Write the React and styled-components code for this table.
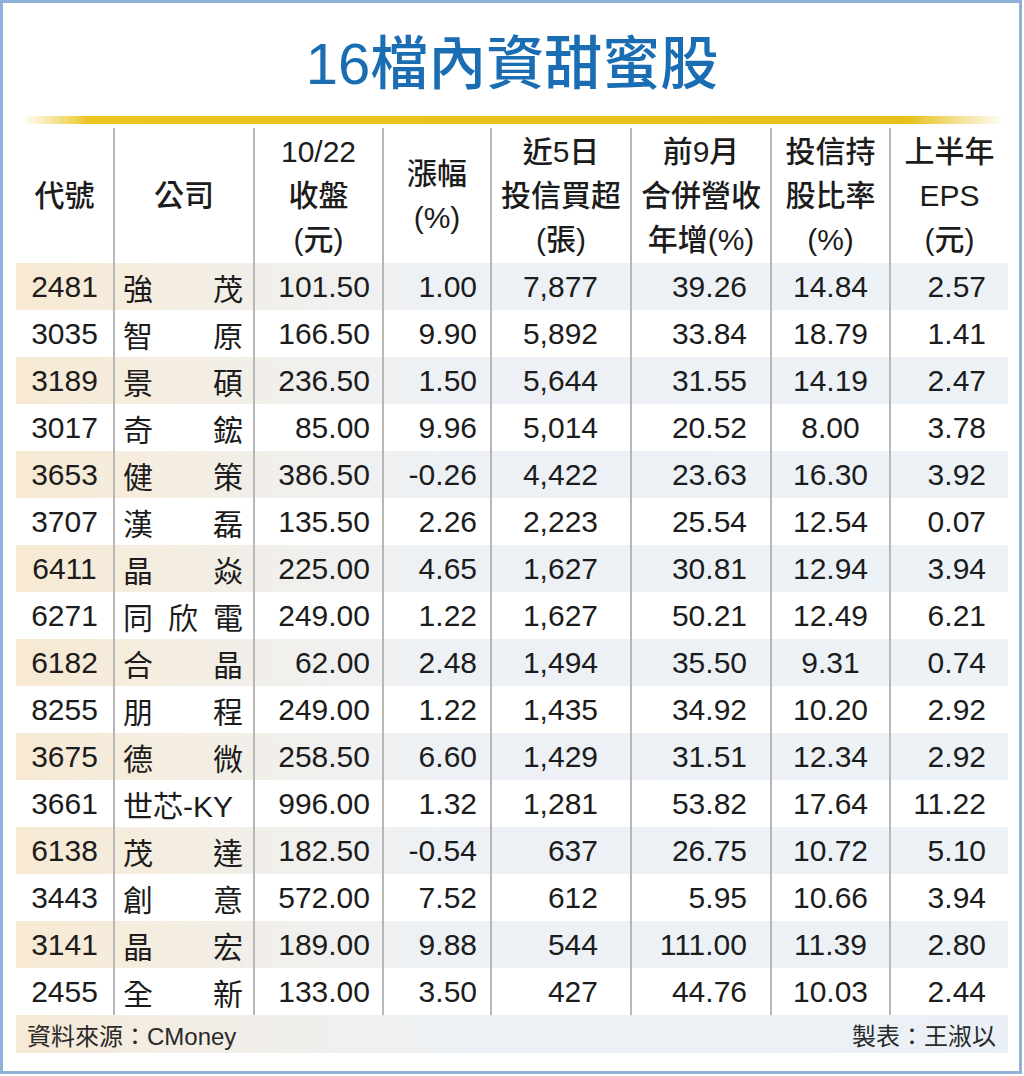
import React from 'react';
import styled, { createGlobalStyle } from 'styled-components';

const GlobalStyle = createGlobalStyle`
  body {
    margin: 0;
    background: #ffffff;
  }
`;

const Frame = styled.div`
  width: 1022px;
  height: 1074px;
  box-sizing: border-box;
  border: 3px solid #8db1d8;
  padding: 0 11px 0 13px;
  background: #ffffff;
  font-family: "Liberation Sans", "Noto Sans CJK TC", sans-serif;
  color: #1c1c1c;
`;

const Title = styled.h1`
  margin: 0;
  padding-top: 27px;
  height: 67px;
  line-height: 67px;
  text-align: center;
  font-size: 58px;
  font-weight: 500;
  color: #1b6db3;
`;

const GoldRule = styled.div`
  margin: 19px 2px 0 6px;
  height: 8px;
  border-radius: 4px;
  background: linear-gradient(
    to right,
    rgba(236, 196, 30, 0) 0%,
    #ebc41f 7%,
    #e9c01b 90%,
    rgba(236, 196, 30, 0) 100%
  );
`;

const Table = styled.div`
  margin-top: 4px;
`;

const Row = styled.div`
  display: grid;
  grid-template-columns: 97px 140px 129px 108px 140px 140px 119px 119px;
  height: ${(p) => (p.$head ? '135px' : '47px')};
  background: ${(p) =>
    p.$striped
      ? 'linear-gradient(to right, #f7e9d2 0%, #f6ecdc 10%, #f0f0ee 30%, #edf1f6 45%, #edf2f7 100%)'
      : 'transparent'};
`;

const HeadCell = styled.div`
  display: flex;
  flex-direction: column;
  justify-content: center;
  align-items: center;
  font-size: 30px;
  line-height: 44px;
  font-weight: 500;
  white-space: nowrap;
  border-left: ${(p) => (p.$first ? 'none' : '2px solid #b7b7b7')};
`;

const Cell = styled.div`
  display: flex;
  align-items: center;
  justify-content: ${(p) => (p.$align === 'right' ? 'flex-end' : 'center')};
  padding-right: ${(p) => p.$pad || 0}px;
  font-size: 30px;
  white-space: nowrap;
  border-left: ${(p) => (p.$first ? 'none' : '2px solid #b7b7b7')};
`;

const NameCell = styled.div`
  display: flex;
  align-items: center;
  justify-content: space-between;
  padding: 0 10px 0 8px;
  font-size: 30px;
  white-space: nowrap;
  border-left: 2px solid #b7b7b7;
`;

const Footer = styled.div`
  display: flex;
  align-items: center;
  justify-content: space-between;
  height: 38px;
  padding: 0 12px 0 11px;
  font-size: 24px;
  color: #2a2a2a;
  background: linear-gradient(to right, #f6e9d5 0%, #f3ede4 15%, #edf1f5 45%, #ebf0f6 100%);
`;

const headers = [
  ['代號'],
  ['公司'],
  ['10/22', '收盤', '(元)'],
  ['漲幅', '(%)'],
  ['近5日', '投信買超', '(張)'],
  ['前9月', '合併營收', '年增(%)'],
  ['投信持', '股比率', '(%)'],
  ['上半年', 'EPS', '(元)'],
];

// align / right padding of the number columns
const numCols = [
  { align: 'right', pad: 12 },
  { align: 'right', pad: 13 },
  { align: 'right', pad: 32 },
  { align: 'right', pad: 23 },
  { align: 'center', pad: 0 },
  { align: 'right', pad: 22 },
];

const rows = [
  ['2481', '強茂', '101.50', '1.00', '7,877', '39.26', '14.84', '2.57'],
  ['3035', '智原', '166.50', '9.90', '5,892', '33.84', '18.79', '1.41'],
  ['3189', '景碩', '236.50', '1.50', '5,644', '31.55', '14.19', '2.47'],
  ['3017', '奇鋐', '85.00', '9.96', '5,014', '20.52', '8.00', '3.78'],
  ['3653', '健策', '386.50', '-0.26', '4,422', '23.63', '16.30', '3.92'],
  ['3707', '漢磊', '135.50', '2.26', '2,223', '25.54', '12.54', '0.07'],
  ['6411', '晶焱', '225.00', '4.65', '1,627', '30.81', '12.94', '3.94'],
  ['6271', '同欣電', '249.00', '1.22', '1,627', '50.21', '12.49', '6.21'],
  ['6182', '合晶', '62.00', '2.48', '1,494', '35.50', '9.31', '0.74'],
  ['8255', '朋程', '249.00', '1.22', '1,435', '34.92', '10.20', '2.92'],
  ['3675', '德微', '258.50', '6.60', '1,429', '31.51', '12.34', '2.92'],
  ['3661', '世芯-KY', '996.00', '1.32', '1,281', '53.82', '17.64', '11.22'],
  ['6138', '茂達', '182.50', '-0.54', '637', '26.75', '10.72', '5.10'],
  ['3443', '創意', '572.00', '7.52', '612', '5.95', '10.66', '3.94'],
  ['3141', '晶宏', '189.00', '9.88', '544', '111.00', '11.39', '2.80'],
  ['2455', '全新', '133.00', '3.50', '427', '44.76', '10.03', '2.44'],
];

const splitName = (name) => (name.includes('-') ? [name] : name.split(''));

const App = () => {
  return (
    <>
      <GlobalStyle />
      <Frame>
        <Title>16檔內資甜蜜股</Title>
        <GoldRule />
        <Table>
          <Row $head>
            {headers.map((lines, i) => (
              <HeadCell key={i} $first={i === 0}>
                {lines.map((l) => (
                  <span key={l}>{l}</span>
                ))}
              </HeadCell>
            ))}
          </Row>
          {rows.map(([code, name, ...nums], r) => (
            <Row key={code + r} $striped={r % 2 === 0}>
              <Cell $first>{code}</Cell>
              <NameCell>
                {splitName(name).map((ch, k) => (
                  <span key={k}>{ch}</span>
                ))}
              </NameCell>
              {nums.map((n, c) => (
                <Cell key={c} $align={numCols[c].align} $pad={numCols[c].pad}>
                  {n}
                </Cell>
              ))}
            </Row>
          ))}
          <Footer>
            <span>資料來源：CMoney</span>
            <span>製表：王淑以</span>
          </Footer>
        </Table>
      </Frame>
    </>
  );
};

export default App;
